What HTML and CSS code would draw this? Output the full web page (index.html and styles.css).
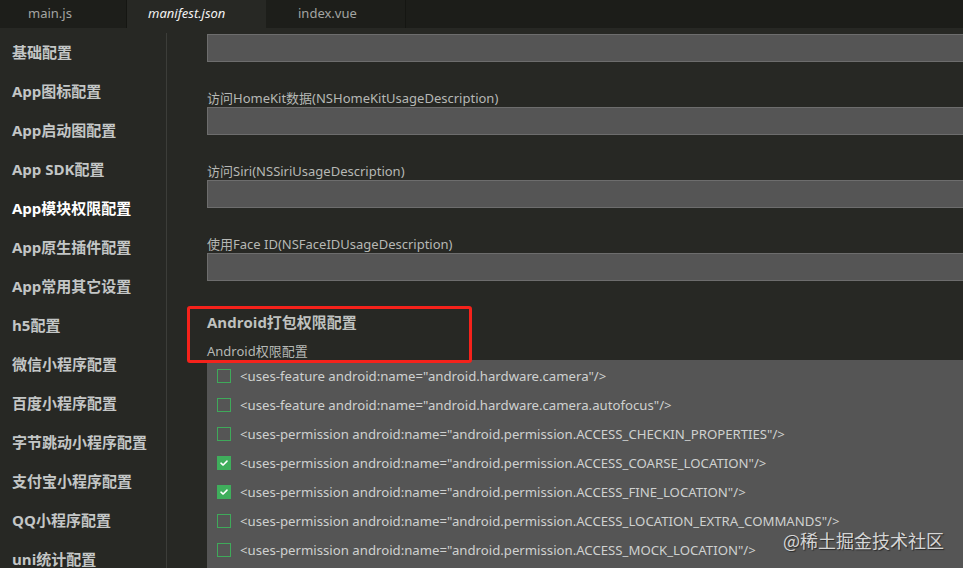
FILE: index.html
```html
<!DOCTYPE html>
<html lang="zh-CN">
<head>
<meta charset="utf-8">
<title>manifest.json</title>
<link rel="stylesheet" href="styles.css">
</head>
<body>
<div class="tabs">
  <div class="tab tab-main">main.js</div>
  <div class="tab tab-manifest active">manifest.json</div>
  <div class="tab tab-index">index.vue</div>
</div>
<div class="main">
  <nav class="sidebar">
    <div class="nav-item">基础配置</div>
    <div class="nav-item">App图标配置</div>
    <div class="nav-item">App启动图配置</div>
    <div class="nav-item">App SDK配置</div>
    <div class="nav-item active">App模块权限配置</div>
    <div class="nav-item">App原生插件配置</div>
    <div class="nav-item">App常用其它设置</div>
    <div class="nav-item">h5配置</div>
    <div class="nav-item">微信小程序配置</div>
    <div class="nav-item">百度小程序配置</div>
    <div class="nav-item">字节跳动小程序配置</div>
    <div class="nav-item">支付宝小程序配置</div>
    <div class="nav-item">QQ小程序配置</div>
    <div class="nav-item">uni统计配置</div>
  </nav>
  <section class="content">
    <div class="field first">
      <div class="input"></div>
    </div>
    <div class="field">
      <div class="label">访问HomeKit数据(NSHomeKitUsageDescription)</div>
      <div class="input"></div>
    </div>
    <div class="field">
      <div class="label">访问Siri(NSSiriUsageDescription)</div>
      <div class="input"></div>
    </div>
    <div class="field">
      <div class="label">使用Face ID(NSFaceIDUsageDescription)</div>
      <div class="input"></div>
    </div>
    <div class="android">
      <div class="highlight"></div>
      <h2 class="section-title">Android打包权限配置</h2>
      <div class="sub-label">Android权限配置</div>
      <div class="perm-list">
        <div class="perm"><span class="cb"></span><span>&lt;uses-feature android:name="android.hardware.camera"/&gt;</span></div>
        <div class="perm"><span class="cb"></span><span>&lt;uses-feature android:name="android.hardware.camera.autofocus"/&gt;</span></div>
        <div class="perm"><span class="cb"></span><span>&lt;uses-permission android:name="android.permission.ACCESS_CHECKIN_PROPERTIES"/&gt;</span></div>
        <div class="perm"><span class="cb checked"><svg viewBox="0 0 14 14" width="14" height="14"><path d="M3.5 7.2 L6 9.4 L10.5 4.8" fill="none" stroke="#fff" stroke-width="1.8" stroke-linecap="round" stroke-linejoin="round"/></svg></span><span>&lt;uses-permission android:name="android.permission.ACCESS_COARSE_LOCATION"/&gt;</span></div>
        <div class="perm"><span class="cb checked"><svg viewBox="0 0 14 14" width="14" height="14"><path d="M3.5 7.2 L6 9.4 L10.5 4.8" fill="none" stroke="#fff" stroke-width="1.8" stroke-linecap="round" stroke-linejoin="round"/></svg></span><span>&lt;uses-permission android:name="android.permission.ACCESS_FINE_LOCATION"/&gt;</span></div>
        <div class="perm"><span class="cb"></span><span>&lt;uses-permission android:name="android.permission.ACCESS_LOCATION_EXTRA_COMMANDS"/&gt;</span></div>
        <div class="perm"><span class="cb"></span><span>&lt;uses-permission android:name="android.permission.ACCESS_MOCK_LOCATION"/&gt;</span></div>
      </div>
    </div>
  </section>
</div>
<div class="watermark">@稀土掘金技术社区</div>
</body>
</html>
```
FILE: styles.css
```css
* { box-sizing: border-box; }
html, body {
  margin: 0;
  height: 568px;
  overflow: hidden;
}
body {
  background: #272824;
  font-family: "Noto Sans", "Open Sans", "Noto Sans CJK SC", sans-serif;
  color: #c4c6c4;
  position: relative;
}
.tabs {
  display: flex;
  height: 28px;
  background: #1c1d19;
}
.tab {
  height: 28px;
  line-height: 26px;
  font-size: 13px;
  color: #a3a5a2;
  border-right: 1px solid #151612;
  background: #1d1e1a;
}
.tab-main { width: 127px; padding-left: 28px; }
.tab-manifest { width: 139px; padding-left: 21px; }
.tab-index { width: 140px; padding-left: 32px; }
.tab.active {
  background: #272824;
  color: #f2f2f2;
  font-style: italic;
  border-right: none;
}
.main {
  display: flex;
  padding-top: 5px;
}
.sidebar {
  width: 167px;
  flex: none;
  border-right: 1px solid #3c3d39;
  height: 560px;
}
.nav-item {
  height: 39px;
  line-height: 39px;
  padding-left: 12px;
  font-size: 15px;
  font-weight: bold;
  color: #c3c6c6;
  white-space: nowrap;
  font-family: "Open Sans", "Noto Sans CJK SC", sans-serif;
}
.nav-item.active { color: #ffffff; }
.content {
  flex: 1;
  padding-left: 40px;
  padding-top: 1px;
  overflow: hidden;
  min-width: 0;
}
.field { margin-top: 27px; }
.field.first { margin-top: 0; }
.label {
  height: 18px;
  line-height: 18px;
  font-size: 13px;
  color: #b6b8b5;
  white-space: nowrap;
}
.input {
  height: 28px;
  background: #555555;
  border: 1px solid #6d6d6d;
  margin-right: -20px;
}
.android {
  position: relative;
  padding-top: 31px;
}
.highlight {
  position: absolute;
  left: -20px;
  top: 25px;
  width: 285px;
  height: 57px;
  border: 3px solid #f5221b;
  border-radius: 3px;
  pointer-events: none;
  z-index: 2;
}
.section-title {
  margin: 0;
  height: 20px;
  line-height: 20px;
  font-size: 15px;
  font-weight: bold;
  color: #bfc1bf;
  font-family: "Open Sans", "Noto Sans CJK SC", sans-serif;
}
.sub-label {
  margin-top: 10px;
  height: 18px;
  line-height: 18px;
  font-size: 13px;
  color: #b6b8b5;
}
.perm-list {
  background: #555555;
  padding: 1px 0 0 10px;
  margin-right: -20px;
  height: 220px;
}
.perm {
  display: flex;
  align-items: center;
  height: 29px;
  font-size: 13.2px;
  color: #cfd1d0;
  white-space: nowrap;
}
.cb {
  width: 14px;
  height: 14px;
  border: 1px solid #3fa95a;
  margin-right: 9px;
  flex: none;
  display: flex;
  align-items: center;
  justify-content: center;
}
.cb.checked {
  background: #3fae5c;
  border-color: #3fae5c;
}
.cb svg { display: block; }
.watermark {
  position: absolute;
  left: 783px;
  top: 527px;
  font-size: 18px;
  color: #d6d6d6;
  font-family: "Noto Sans CJK SC", sans-serif;
  text-shadow: 1px 1px 1px #2a2a2a;
  white-space: nowrap;
}
```
